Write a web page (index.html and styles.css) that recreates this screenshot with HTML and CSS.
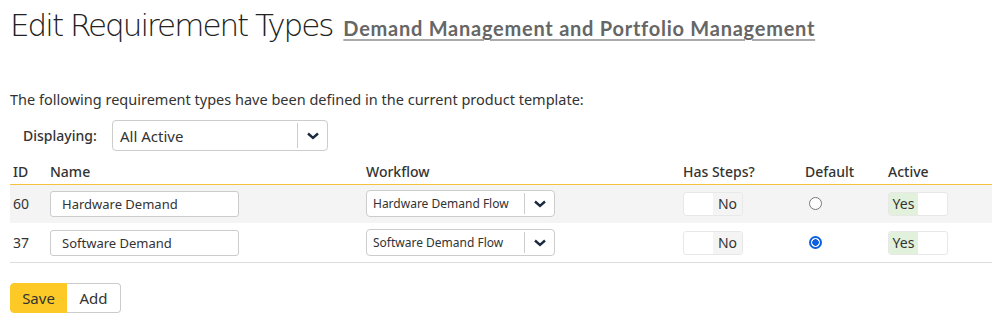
FILE: index.html
```html
<!DOCTYPE html>
<html lang="en">
<head>
  <meta charset="UTF-8">
  <title>Edit Requirement Types</title>
  <link rel="stylesheet" href="styles.css">
</head>
<body>
  <h1 class="page-title">
    Edit Requirement Types
    <a href="#" class="template-link">Demand Management and Portfolio Management</a>
  </h1>

  <p class="intro">The following requirement types have been defined in the current product template:</p>

  <div class="filter">
    <label class="filter-label">Displaying:</label>
    <div class="select select-lg">
      <span class="select-text">All Active</span>
      <span class="select-btn">
        <svg width="14" height="10" viewBox="0 0 14 10"><path d="M2 2.5 L7 7 L12 2.5" fill="none" stroke="#1b2a40" stroke-width="2.4"/></svg>
      </span>
    </div>
  </div>

  <table class="types">
    <colgroup>
      <col style="width:37px">
      <col style="width:316px">
      <col style="width:317px">
      <col style="width:122px">
      <col style="width:83px">
      <col style="width:107px">
    </colgroup>
    <thead>
      <tr>
        <th>ID</th>
        <th>Name</th>
        <th>Workflow</th>
        <th>Has Steps?</th>
        <th>Default</th>
        <th>Active</th>
      </tr>
    </thead>
    <tbody>
      <tr class="shaded">
        <td>60</td>
        <td><div class="text-input">Hardware Demand</div></td>
        <td>
          <div class="select select-sm">
            <span class="select-text">Hardware Demand Flow</span>
            <span class="select-btn">
              <svg width="14" height="10" viewBox="0 0 14 10"><path d="M2 2.5 L7 7 L12 2.5" fill="none" stroke="#1b2a40" stroke-width="2.4"/></svg>
            </span>
          </div>
        </td>
        <td><div class="toggle"><span class="toggle-off"></span><span class="toggle-no">No</span></div></td>
        <td><span class="radio"></span></td>
        <td><div class="toggle"><span class="toggle-yes">Yes</span><span class="toggle-off"></span></div></td>
      </tr>
      <tr>
        <td>37</td>
        <td><div class="text-input">Software Demand</div></td>
        <td>
          <div class="select select-sm">
            <span class="select-text">Software Demand Flow</span>
            <span class="select-btn">
              <svg width="14" height="10" viewBox="0 0 14 10"><path d="M2 2.5 L7 7 L12 2.5" fill="none" stroke="#1b2a40" stroke-width="2.4"/></svg>
            </span>
          </div>
        </td>
        <td><div class="toggle"><span class="toggle-off"></span><span class="toggle-no">No</span></div></td>
        <td><span class="radio checked"></span></td>
        <td><div class="toggle"><span class="toggle-yes">Yes</span><span class="toggle-off"></span></div></td>
      </tr>
    </tbody>
  </table>

  <div class="btn-group">
    <button class="btn btn-primary">Save</button>
    <button class="btn">Add</button>
  </div>
</body>
</html>
```

FILE: styles.css
```css
* {
  margin: 0;
  padding: 0;
  box-sizing: border-box;
}

body {
  font-family: 'Noto Sans', sans-serif;
  font-size: 14px;
  color: #333;
  background: #fff;
  padding: 0 10px;
}

.page-title {
  font-family: 'DejaVu Sans', sans-serif;
  font-weight: 200;
  font-size: 31px;
  letter-spacing: -2px;
  color: #222;
  line-height: 40px;
  padding-top: 5px;
}

.template-link {
  font-family: 'Lato', sans-serif;
  font-weight: 700;
  font-size: 20px;
  letter-spacing: 0.75px;
  color: #666;
  text-decoration: underline;
  text-decoration-color: #aaa;
  text-decoration-thickness: 2px;
  text-underline-offset: 3px;
  margin-left: 3px;
}

.intro {
  margin-top: 41px;
  line-height: 20px;
  font-size: 14.5px;
}

.filter {
  display: flex;
  align-items: center;
  margin-top: 11px;
  padding-left: 13px;
}

.filter-label {
  font-weight: 500;
  width: 89px;
}

.select {
  display: flex;
  align-items: stretch;
  background: #fff;
  border: 1px solid #ccc;
  border-radius: 4px;
}

.select-text {
  flex: 1;
  display: flex;
  align-items: center;
}

.select-btn {
  width: 30px;
  display: flex;
  align-items: center;
  justify-content: center;
  border-left: 1px solid #ccc;
  margin: 2px 0;
}

.select-lg {
  width: 216px;
  height: 31px;
  font-size: 15px;
}

.select-lg .select-text {
  padding-left: 7px;
}

.select-sm {
  width: 189px;
  height: 27px;
  font-size: 12px;
}

.select-sm .select-text {
  padding-left: 6px;
}

.types {
  border-collapse: collapse;
  table-layout: fixed;
  width: 982px;
  margin-top: 9px;
}

.types th {
  text-align: left;
  font-weight: 500;
  height: 24px;
  padding: 0 3px;
  border-bottom: 1px solid #f5c33b;
}

.types td {
  padding: 0 3px;
  height: 39px;
  border-bottom: 1px solid #fff;
}

.types tbody tr:last-child td {
  border-bottom: 1px solid #ddd;
}

.types tr.shaded td {
  background: #f4f4f4;
}

.text-input {
  width: 189px;
  height: 26px;
  border: 1px solid #ccc;
  border-radius: 3px;
  background: #fff;
  padding-left: 11px;
  line-height: 24px;
  font-size: 13px;
}

.toggle {
  display: flex;
  width: 60px;
  height: 24px;
  border: 1px solid #e8e8e8;
  border-radius: 3px;
  overflow: hidden;
  background: #fff;
  font-size: 14px;
}

.toggle span {
  flex: 1;
  display: flex;
  align-items: center;
  justify-content: center;
}

.toggle-no {
  background: #f4f4f4;
}

.toggle-yes {
  background: #e2f1dc;
}

.radio {
  display: block;
  width: 13px;
  height: 13px;
  border: 1.5px solid #777;
  border-radius: 50%;
  margin-left: 4px;
  background: #fff;
}

.radio.checked {
  border: 2px solid #0b5fe0;
  background: radial-gradient(circle, #0b5fe0 0 3px, #fff 3.5px);
}

.btn-group {
  display: flex;
  margin-top: 20px;
}

.btn {
  font-family: 'Noto Sans', sans-serif;
  font-size: 15px;
  color: #333;
  height: 30px;
  width: 54px;
  background: #fff;
  border: 1px solid #ccc;
  border-left: none;
  border-radius: 0 4px 4px 0;
}

.btn-primary {
  width: 57px;
  background: #fcc927;
  border: 1px solid #fcc927;
  border-radius: 4px 0 0 4px;
}
```
